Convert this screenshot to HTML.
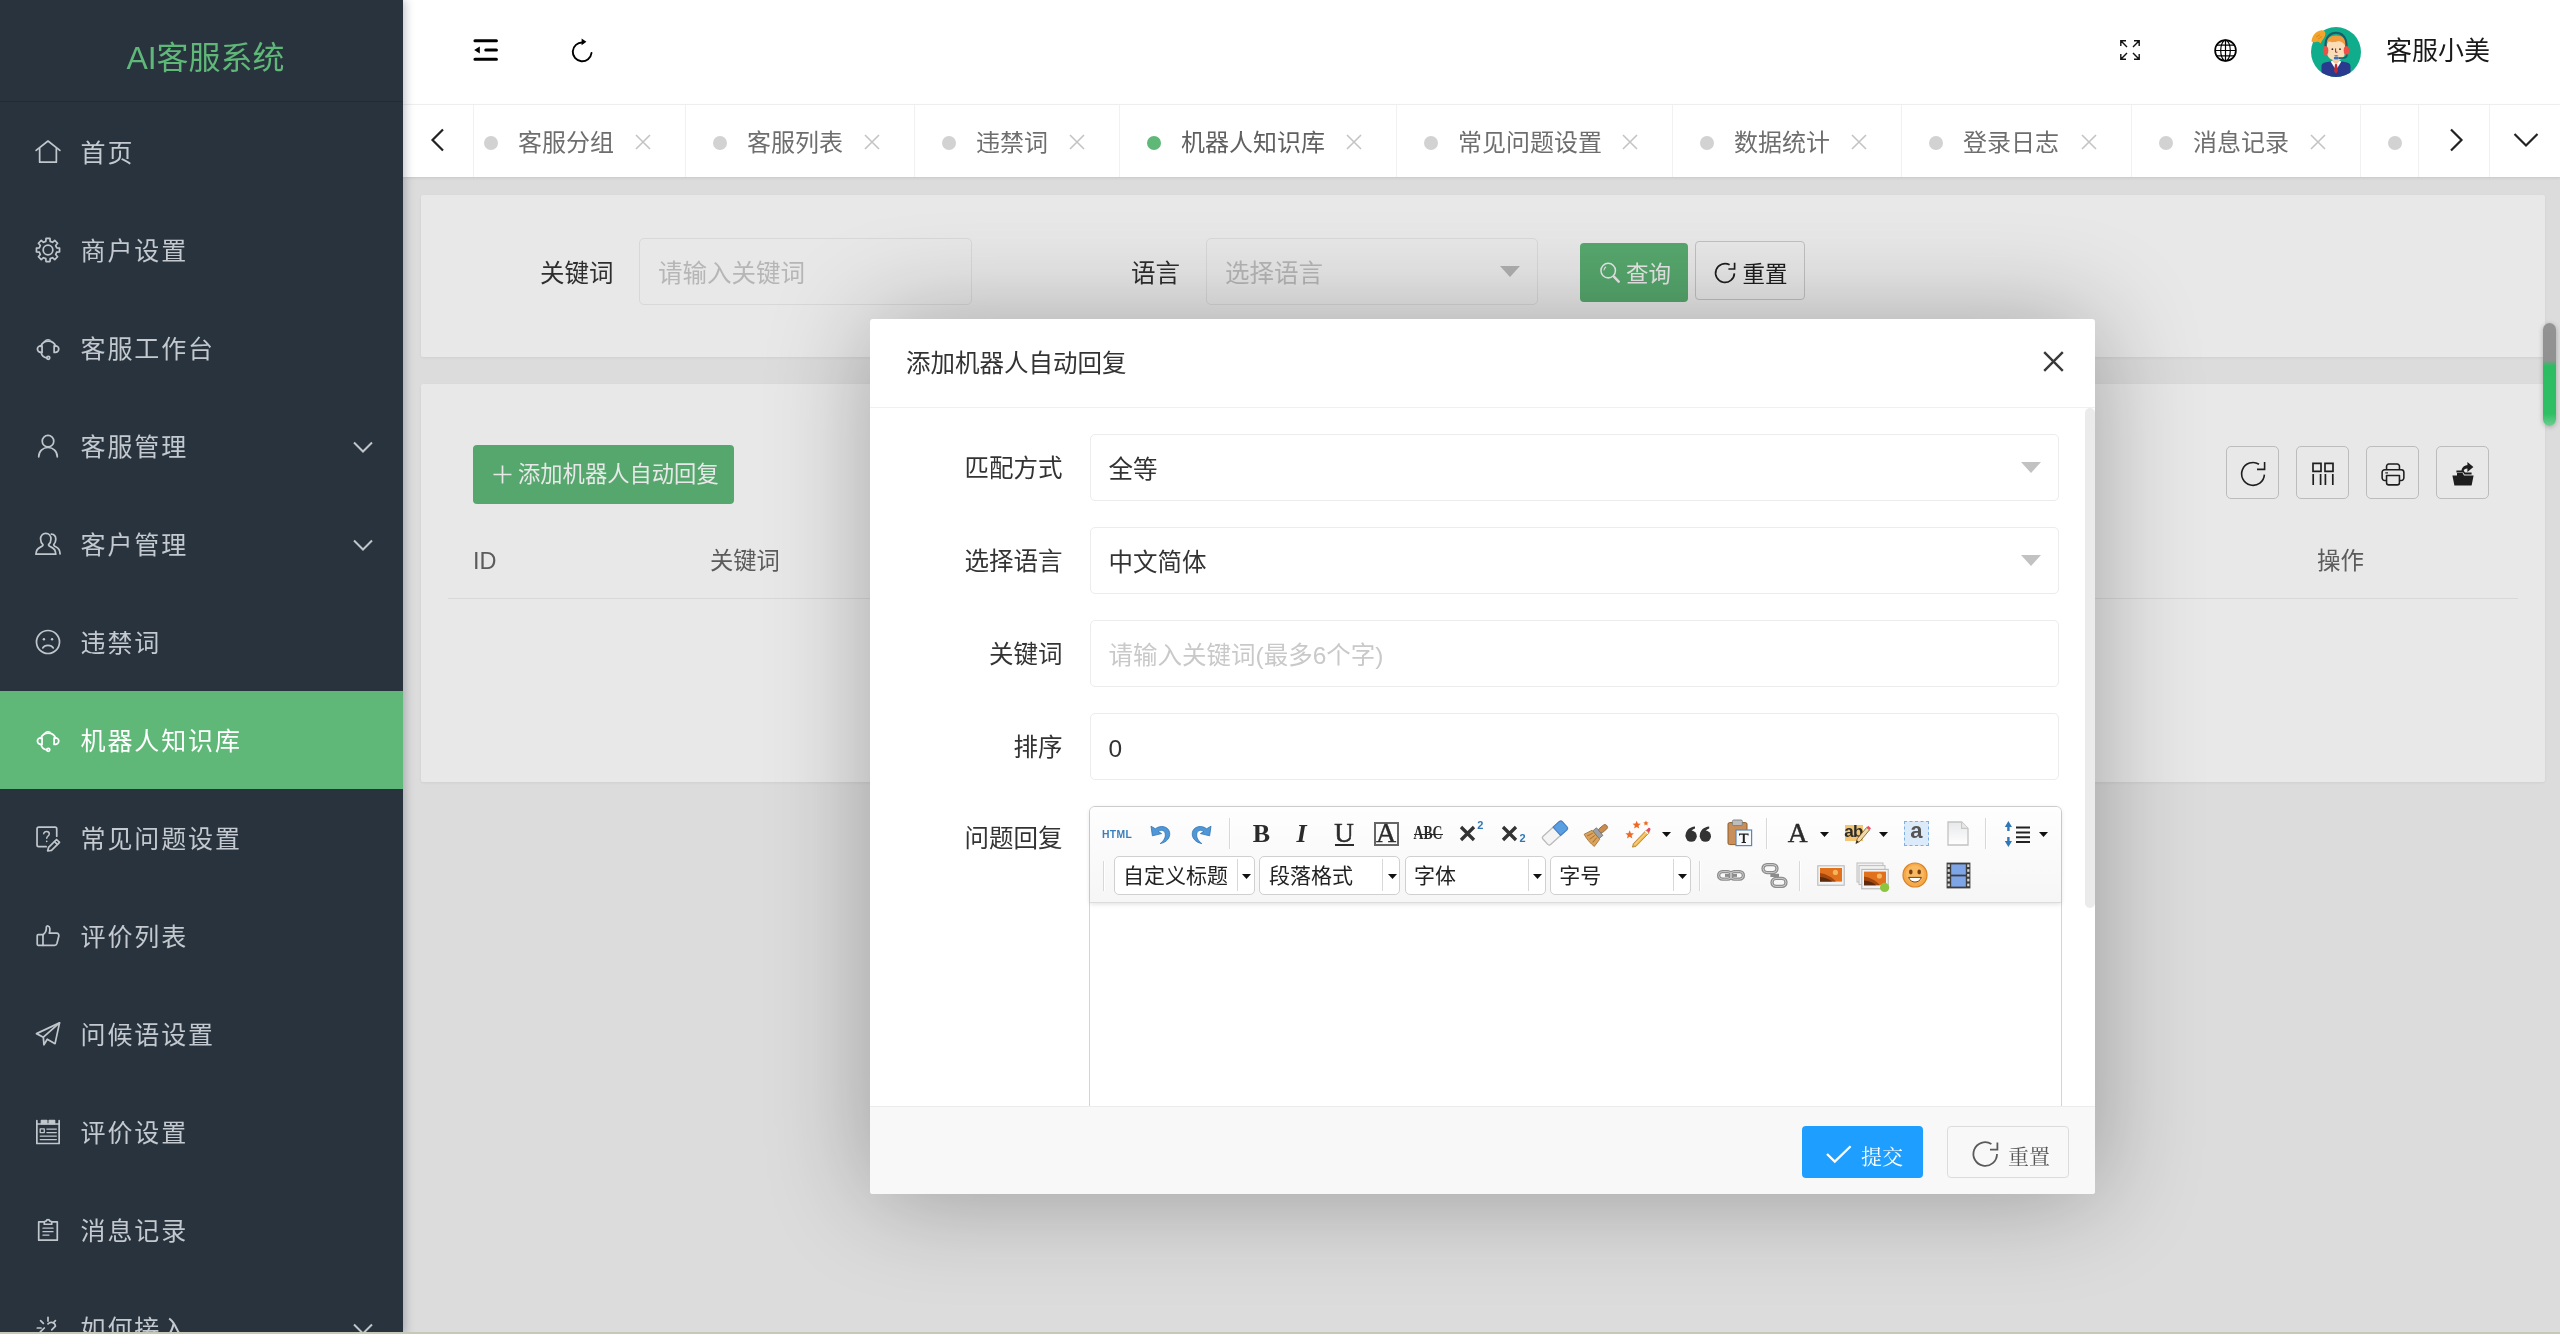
<!DOCTYPE html>
<html lang="zh-CN">
<head>
<meta charset="utf-8">
<title>AI客服系统</title>
<style>

*{box-sizing:border-box;margin:0;padding:0}
html,body{width:2560px;height:1334px;overflow:hidden;background:#f2f2f2;font-family:"Liberation Sans","Noto Sans CJK SC",sans-serif;color:#333}
.abs{position:absolute}
svg{display:block;overflow:visible}
/* ---------- sidebar ---------- */
#side{position:absolute;left:0;top:0;width:403px;height:1334px;background:#28333E;z-index:30;box-shadow:2px 0 9px rgba(20,30,50,.28);overflow:hidden}
#logo{position:absolute;left:0;top:0;width:403px;height:102px;border-bottom:1px solid #222c36;color:#5FB878;font-size:32px;text-align:center;padding-left:8px;line-height:116px}
.mi{position:absolute;left:0;width:403px;height:98px;color:#c3c9cf;font-size:25px;letter-spacing:1.9px;line-height:98px}
.mi .tx{position:absolute;left:80.5px;top:0.5px;white-space:nowrap}
.mi .ic{position:absolute;left:34.5px;top:35.5px;width:26px;height:26px}
.mi .ic svg{width:26px;height:26px;stroke:#c1c6cb;fill:none;stroke-width:1.85;stroke-linecap:round;stroke-linejoin:round}
.mi.on{background:#5FB878;color:#fff}
.mi.on .ic svg{stroke:#fff}
.mi .more{position:absolute;left:352px;top:43px;width:22px;height:14px}
.mi .more svg{width:22px;height:14px;stroke:#c1c6cb;fill:none;stroke-width:2}
/* ---------- header ---------- */
#head{position:absolute;left:403px;top:0;width:2157px;height:105px;background:#fff;border-bottom:1px solid #f2f2f2;z-index:20}
#tabs{position:absolute;left:403px;top:105px;width:2157px;height:72px;background:#fff;z-index:20;box-shadow:0 1px 3px rgba(0,0,0,.10);overflow:hidden}
.tab{position:absolute;top:0;height:72px;border-right:1px solid #f1f1f1;font-size:24px;line-height:76px;color:#6e6e6e;white-space:nowrap}
.tab .dot{position:absolute;left:27px;top:31px;width:14px;height:14px;border-radius:50%;background:#d2d2d2}
.tab.on .dot{background:#5FB878}
.tab.on{color:#606060}
.tab .t{position:absolute;left:61px;top:0}
.tab .x{position:absolute;top:29px;width:16px;height:16px}
.tab .x svg{width:16px;height:16px;stroke:#c4c4c4;stroke-width:1.6;fill:none}
.tcell{position:absolute;top:0;height:72px;background:#fff;z-index:2}
/* ---------- page body (iframe) ---------- */
#page{position:absolute;left:403px;top:177px;width:2157px;height:1157px;background:#f2f2f2;z-index:1;overflow:hidden}
.card{position:absolute;background:#fff;border-radius:2px;box-shadow:0 1px 3px rgba(0,0,0,.06)}
#shade{position:absolute;left:0;top:0;width:2157px;height:1157px;background:rgba(0,0,0,.09);z-index:5}
.lbl{position:absolute;font-size:24.5px;color:#333;white-space:nowrap;line-height:70px;height:66px}
.inp{position:absolute;height:66.5px;border:1px solid #ececec;border-radius:5px;background:#fff;font-size:24.5px;line-height:69px;padding-left:18px;color:#333;white-space:nowrap;overflow:hidden}
.ph{color:#c9c9c9}
.caret{position:absolute;width:0;height:0;border-left:10px solid transparent;border-right:10px solid transparent;border-top:11px solid #c2c2c2}
.btn{position:absolute;border-radius:4px;white-space:nowrap}
/* ---------- modal ---------- */
#modal{position:absolute;left:467px;top:142px;width:1225px;height:875px;background:#fff;border-radius:3px;box-shadow:2px 2px 104px rgba(0,0,0,.3);z-index:10;overflow:hidden}

.tb{position:absolute;top:269px;width:53px;height:53px;border:1px solid #cfcfcf;border-radius:5px;background:#fff}
.tb svg{position:absolute;left:11.5px;top:13px;width:28px;height:28px}

#ed{position:absolute;left:219px;top:486.5px;width:972.5px;height:330px;border:1px solid #d4d4d4;border-radius:6px;background:#fff}
#edtb{position:absolute;left:0;top:0;width:970.5px;height:96.5px;border-bottom:1px solid #dcdcdc;border-radius:5px 5px 0 0;background:linear-gradient(#fefefe,#f6f6f6);box-shadow:0 1px 5px rgba(0,0,0,.13)}
.tbt{width:60px;height:40px;text-align:center;white-space:nowrap}
.cb{position:absolute;width:141px;height:39px;border:1px solid #d0d0d0;border-radius:5px;background:#fff;font-size:21px;line-height:38px;color:#222;white-space:nowrap}
.cb span{position:absolute;left:8.5px;top:0}
.cb i{position:absolute;left:122px;top:2px;width:1px;height:32px;background:#d8d8d8}
#foot{position:absolute;left:0;top:787px;width:1225px;height:90px;background:#f8f8f8;border-top:1px solid #ececec}

#side,#head,#tabs,#page{will-change:transform}

</style>
</head>
<body>
<div id="side">
<div id="logo">AI客服系统</div>
<div class="mi" style="top:103px"><span class="ic"><svg viewBox="0 0 28 28"><path d="M1.2 12.3 L14 2.2 L26.8 12.3"/><path d="M5 10.2 V25 H23 V10.2"/></svg></span><span class="tx">首页</span></div>
<div class="mi" style="top:201px"><span class="ic"><svg viewBox="0 0 28 28"><path d="M23.30 11.62 L26.42 11.87 L26.42 16.13 L23.30 16.38 L22.26 18.90 L24.29 21.27 L21.27 24.29 L18.90 22.26 L16.38 23.30 L16.13 26.42 L11.87 26.42 L11.62 23.30 L9.10 22.26 L6.73 24.29 L3.71 21.27 L5.74 18.90 L4.70 16.38 L1.58 16.13 L1.58 11.87 L4.70 11.62 L5.74 9.10 L3.71 6.73 L6.73 3.71 L9.10 5.74 L11.62 4.70 L11.87 1.58 L16.13 1.58 L16.38 4.70 L18.90 5.74 L21.27 3.71 L24.29 6.73 L22.26 9.10 Z"/><circle cx="14" cy="14" r="5.2"/></svg></span><span class="tx">商户设置</span></div>
<div class="mi" style="top:299px"><span class="ic"><svg viewBox="0 0 28 28"><path d="M6.2 12.2 A8.6 8.6 0 0 1 22.4 12.2"/><path d="M10 7.2 A5.6 5.6 0 0 1 16.5 5.6" stroke-width="1.3"/><path d="M7.6 11.6 H6.2 A3.6 3.6 0 0 0 6.2 18.8 H7.6 Z"/><path d="M20.6 11.6 H22 A3.6 3.6 0 0 1 22 18.8 H20.6 Z"/><path d="M6.6 18.8 C7.2 22.6 9.6 24.3 12.6 24.6"/><circle cx="14.3" cy="24.6" r="1.6"/></svg></span><span class="tx">客服工作台</span></div>
<div class="mi" style="top:397px"><span class="ic"><svg viewBox="0 0 28 28"><circle cx="14" cy="8.8" r="6.2"/><path d="M4 25.6 C4 19.6 8.4 15.6 14 15.6 S24 19.6 24 25.6"/></svg></span><span class="tx">客服管理</span><span class="more"><svg viewBox="0 0 22 14"><path d="M2 2.5 L11 11.5 L20 2.5"/></svg></span></div>
<div class="mi" style="top:495px"><span class="ic"><svg viewBox="0 0 28 28"><path d="M11.6 2.6 C15 2.6 17.2 5.2 17.2 8.6 C17.2 11.4 16 13.4 14.6 14.6 C14.4 16 15.6 16.6 18 17.6 C20.8 18.8 22.2 20.6 22.4 25 H1 C1.2 20.6 2.6 18.8 5.4 17.6 C7.8 16.6 8.8 16 8.6 14.6 C7.2 13.4 6 11.4 6 8.6 C6 5.2 8.2 2.6 11.6 2.6 Z"/><path d="M17.6 3.4 C20.6 3.6 22.4 6 22.4 9 C22.4 11.6 21.4 13.4 20.2 14.6 C20 15.8 21 16.4 22.8 17.2 C25.4 18.4 26.8 20.4 27 24.6"/></svg></span><span class="tx">客户管理</span><span class="more"><svg viewBox="0 0 22 14"><path d="M2 2.5 L11 11.5 L20 2.5"/></svg></span></div>
<div class="mi" style="top:593px"><span class="ic"><svg viewBox="0 0 28 28"><circle cx="14" cy="14" r="12.4"/><circle cx="9.6" cy="11" r="1.3" fill="currentColor" stroke="none"/><circle cx="18.4" cy="11" r="1.3" fill="currentColor" stroke="none"/><path d="M8.4 20.4 C10.4 16.6 17.6 16.6 19.6 20.4"/></svg></span><span class="tx">违禁词</span></div>
<div class="mi on" style="top:691px"><span class="ic"><svg viewBox="0 0 28 28"><path d="M6.2 12.2 A8.6 8.6 0 0 1 22.4 12.2"/><path d="M10 7.2 A5.6 5.6 0 0 1 16.5 5.6" stroke-width="1.3"/><path d="M7.6 11.6 H6.2 A3.6 3.6 0 0 0 6.2 18.8 H7.6 Z"/><path d="M20.6 11.6 H22 A3.6 3.6 0 0 1 22 18.8 H20.6 Z"/><path d="M6.6 18.8 C7.2 22.6 9.6 24.3 12.6 24.6"/><circle cx="14.3" cy="24.6" r="1.6"/></svg></span><span class="tx">机器人知识库</span></div>
<div class="mi" style="top:789px"><span class="ic"><svg viewBox="0 0 28 28"><path d="M23.4 12 V4 A1.8 1.8 0 0 0 21.6 2.2 H4 A1.8 1.8 0 0 0 2.2 4 V21.6 A1.8 1.8 0 0 0 4 23.4 H12"/><path d="M9.4 9.4 C9.4 6.2 15.4 6.2 15.4 9.6 C15.4 11.8 12.6 12 12.6 14.4" stroke-width="1.6"/><circle cx="12.6" cy="17.6" r="0.9" fill="currentColor" stroke="none"/><path d="M14.6 24.2 L23.2 15.6 L26.4 18.8 L17.8 27.4 L13.6 28 Z"/><path d="M21 17.8 L24.2 21"/></svg></span><span class="tx">常见问题设置</span></div>
<div class="mi" style="top:887px"><span class="ic"><svg viewBox="0 0 28 28"><path d="M8.6 12.6 H3.4 A1 1 0 0 0 2.4 13.6 V23 A1 1 0 0 0 3.4 24 H8.6 Z"/><path d="M8.6 12.6 C11.6 10.6 12.4 7.6 12.2 4.4 C12.2 2.6 15.6 2.6 16 6 C16.2 8 15.8 9.6 15.4 11 H23.2 C25.2 11 26 12.6 25.6 14.2 L23.6 22 C23.2 23.4 22.2 24 21 24 H8.6"/></svg></span><span class="tx">评价列表</span></div>
<div class="mi" style="top:985px"><span class="ic"><svg viewBox="0 0 28 28"><path d="M1.6 13.6 L26.4 2 L21.6 24.4 L13.2 19.6 L9.6 25.6 L9 17.4 Z"/><path d="M9 17.4 L26.4 2"/></svg></span><span class="tx">问候语设置</span></div>
<div class="mi" style="top:1083px"><span class="ic"><svg viewBox="0 0 28 28"><path d="M2 5.4 H26 V26.4 H2 Z"/><path d="M2 5.4 V1.6 M26 5.4 V1.6"/><path d="M7 1.6 H12.6 V5 H7 Z M15.4 1.6 H21 V5 H15.4 Z" fill="currentColor"/><path d="M5.6 10.6 H10 V14.6 H5.6 Z" stroke-width="1.4"/><path d="M12.8 10.8 H23 M12.8 14.6 H23 M5.6 18.4 H23 M5.6 22.2 H23" stroke-width="1.4"/></svg></span><span class="tx">评价设置</span></div>
<div class="mi" style="top:1181px"><span class="ic"><svg viewBox="0 0 28 28"><path d="M9.4 5.2 H4 V25 H24 V5.2 H18.6"/><path d="M10 7.8 V5.6 C10 4.6 11 4.6 12 4.4 C12.4 2.2 15.6 2.2 16 4.4 C17 4.6 18 4.6 18 5.6 V7.8 Z"/><path d="M8.6 12 H19.4 M8.6 15.8 H19.4 M8.6 19.6 H15" stroke-width="1.4"/></svg></span><span class="tx">消息记录</span></div>
<div class="mi" style="top:1279px"><span class="ic"><svg viewBox="0 0 28 28"><path d="M6 6 L9 9 M14 2.5 V6.5 M2.5 14 H6.5 M22 6 L19.6 8.4"/><path d="M14 9.5 C17 6.5 21.5 8 22 12 L18 16"/><path d="M10 14 L6 18 C3 21 6 25 10 24"/></svg></span><span class="tx">如何接入</span><span class="more"><svg viewBox="0 0 22 14"><path d="M2 2.5 L11 11.5 L20 2.5"/></svg></span></div>
</div>
<div id="head">
<svg class="abs" style="left:70px;top:38px;width:26px;height:24px" viewBox="0 0 26 24" fill="none" stroke="#000" stroke-width="3.1" stroke-linecap="round"><path d="M2 2.8 H23.4 M12.8 12 H23.4 M2 21.2 H23.4"/><path d="M1.2 12 L6.8 8.4 V15.6 Z" fill="#000" stroke="none"/></svg>
<svg class="abs" style="left:166px;top:36px;width:28px;height:28px" viewBox="0 0 28 28" fill="none" stroke="#000" stroke-width="1.9" stroke-linecap="round"><path d="M22.5 17 A9.4 9.4 0 1 1 13.6 6.5"/><path d="M12.6 2.6 L17.4 5.8 L12.6 9.2 Z" fill="#000" stroke="none"/></svg>
<svg class="abs" style="left:1716.5px;top:39.5px;width:20px;height:20px" viewBox="0 0 20 20" fill="none" stroke="#111" stroke-width="1.4"><path d="M7.0 7.0 L0.8 0.8 M6.0 0.8 H0.8 V6.0 M13.0 7.0 L19.2 0.8 M14.0 0.8 H19.2 V6.0 M7.0 13.0 L0.8 19.2 M6.0 19.2 H0.8 V14.0 M13.0 13.0 L19.2 19.2 M14.0 19.2 H19.2 V14.0"/></svg>
<svg class="abs" style="left:1811px;top:38.5px;width:23px;height:23px" viewBox="0 0 23 23" fill="none" stroke="#000" stroke-width="1.7"><circle cx="11.5" cy="11.5" r="10.4"/><ellipse cx="11.5" cy="11.5" rx="4.8" ry="10.4" stroke-width="1.2"/><path d="M1.1 11.5 H21.9 M11.5 1.1 V21.9 M2.8 6.2 H20.2 M2.8 16.8 H20.2" stroke-width="1.2"/></svg>
<svg class="abs" style="left:1908px;top:27px;width:50px;height:50px" viewBox="0 0 50 50">
<defs><clipPath id="avc"><circle cx="25" cy="25" r="25"/></clipPath></defs>
<circle cx="25" cy="25" r="25" fill="#10ad8c"/>
<g clip-path="url(#avc)">
<path d="M10.5 50 V39.5 C10.5 36.5 12.5 35.6 15 35.2 L21 34 H29 L35 35.2 C37.5 35.6 39.5 36.5 39.5 39.5 V50 Z" fill="#2a3b8f"/>
<path d="M19.6 34.4 L25 43 L30.4 34.4 L25 32.6 Z" fill="#fff"/>
<path d="M24 37 H26 L26.9 44.5 L25 46.4 L23.1 44.5 Z" fill="#c62a2f"/>
<path d="M21.6 29 H28.4 V34.6 L25 37.4 L21.6 34.6 Z" fill="#f4c9a0"/>
</g>
<path d="M16 17 C16 9.5 34 9.5 34 17 V25 C34 30.5 30 33.4 25 33.4 S16 30.5 16 25 Z" fill="#fbdcb8"/>
<path d="M15.6 19 C14.6 11 20 8.4 25.4 8.6 C31 8.6 35.4 11.4 34.4 19 C33 16.4 31 14.6 27.6 14 C23.6 15.6 19 15.2 17.6 14.6 C16.6 15.8 16 17.2 15.6 19 Z" fill="#ef9a3d"/>
<path d="M14.6 21 C13.2 8.6 21 5.8 25 5.8 S36.8 8.6 35.4 21" fill="none" stroke="#1d5a68" stroke-width="2.1"/>
<ellipse cx="14.6" cy="23.6" rx="2.7" ry="4.5" fill="#ef4f45"/>
<ellipse cx="35.4" cy="23.6" rx="2.7" ry="4.5" fill="#ef4f45"/>
<path d="M36 27.6 C36 31.4 33 31.2 27.6 31.2" fill="none" stroke="#1d5a68" stroke-width="1.7"/>
<rect x="22.8" y="29.6" width="5" height="3" rx="1.5" fill="#3b6fb6"/>
<circle cx="21.4" cy="22.2" r="0.9" fill="#3a2a2a"/><circle cx="29" cy="22.2" r="0.9" fill="#3a2a2a"/>
<path d="M24.6 21.4 V25.2 H26.4" fill="none" stroke="#7a3b2a" stroke-width="1"/>
<path d="M22.8 28 C24 29.2 26.4 29.2 27.6 28 Z" fill="#d8564a"/>
<path d="M0.5 14.5 C1 9 4 4.6 9.6 3.4 C12.6 3 14.6 4.4 14.4 7 C14.2 10 12 12 9.6 16.4 C8 14.6 6.6 14.4 5 15 C3.4 15.4 1.6 15.4 0.5 14.5 Z" fill="#f2a42c"/>
<path d="M5 10 L9 7.6 M7 12 L11 9.4" stroke="#d98512" stroke-width="0.9" fill="none"/>
</svg>
<div class="abs" style="left:1983px;top:0;font-size:26px;line-height:102px;color:#1a1a1a;white-space:nowrap">客服小美</div>
</div>
<div id="tabs">
<div class="tab" style="left:54px;width:229px"><i class="dot"></i><span class="t">客服分组</span><span class="x" style="left:178px"><svg viewBox="0 0 16 16"><path d="M1 1 L15 15 M15 1 L1 15"/></svg></span></div><div class="tab" style="left:283px;width:229px"><i class="dot"></i><span class="t">客服列表</span><span class="x" style="left:178px"><svg viewBox="0 0 16 16"><path d="M1 1 L15 15 M15 1 L1 15"/></svg></span></div><div class="tab" style="left:512px;width:205px"><i class="dot"></i><span class="t">违禁词</span><span class="x" style="left:154px"><svg viewBox="0 0 16 16"><path d="M1 1 L15 15 M15 1 L1 15"/></svg></span></div><div class="tab on" style="left:717px;width:277px"><i class="dot"></i><span class="t">机器人知识库</span><span class="x" style="left:226px"><svg viewBox="0 0 16 16"><path d="M1 1 L15 15 M15 1 L1 15"/></svg></span></div><div class="tab" style="left:994px;width:276px"><i class="dot"></i><span class="t">常见问题设置</span><span class="x" style="left:225px"><svg viewBox="0 0 16 16"><path d="M1 1 L15 15 M15 1 L1 15"/></svg></span></div><div class="tab" style="left:1270px;width:229px"><i class="dot"></i><span class="t">数据统计</span><span class="x" style="left:178px"><svg viewBox="0 0 16 16"><path d="M1 1 L15 15 M15 1 L1 15"/></svg></span></div><div class="tab" style="left:1499px;width:230px"><i class="dot"></i><span class="t">登录日志</span><span class="x" style="left:179px"><svg viewBox="0 0 16 16"><path d="M1 1 L15 15 M15 1 L1 15"/></svg></span></div><div class="tab" style="left:1729px;width:229px"><i class="dot"></i><span class="t">消息记录</span><span class="x" style="left:178px"><svg viewBox="0 0 16 16"><path d="M1 1 L15 15 M15 1 L1 15"/></svg></span></div><div class="tab" style="left:1958px;width:229px"><i class="dot"></i><span class="t"></span><span class="x" style="left:178px"><svg viewBox="0 0 16 16"><path d="M1 1 L15 15 M15 1 L1 15"/></svg></span></div>
<div class="tcell" style="left:0;width:71px;border-right:1px solid #f1f1f1"><svg class="abs" style="left:27px;top:23px;width:16px;height:24px" viewBox="0 0 16 24" fill="none" stroke="#222" stroke-width="2.2"><path d="M13 1.5 L2.5 12 L13 22.5"/></svg></div>
<div class="tcell" style="left:2015px;width:72px;border-left:1px solid #f1f1f1;border-right:1px solid #f1f1f1"><svg class="abs" style="left:28.5px;top:23px;width:16px;height:24px" viewBox="0 0 16 24" fill="none" stroke="#222" stroke-width="2.2"><path d="M3 1.5 L13.5 12 L3 22.5"/></svg></div>
<div class="tcell" style="left:2087px;width:70px"><svg class="abs" style="left:23px;top:27px;width:26px;height:16px" viewBox="0 0 26 16" fill="none" stroke="#222" stroke-width="2.2"><path d="M1.5 2 L13 13.5 L24.5 2"/></svg></div>
</div>
<div id="page">
<div class="card" style="left:18px;top:18px;width:2124px;height:162px"></div>
<div class="card" style="left:18px;top:207px;width:2124px;height:398px"></div>
<div class="lbl" style="left:137px;top:62px">关键词</div>
<div class="inp" style="left:236px;top:61px;width:333px;border-color:#eeeeee"><span class="ph">请输入关键词</span></div>
<div class="lbl" style="left:728px;top:62px">语言</div>
<div class="inp" style="left:803px;top:61px;width:332px;border-color:#eeeeee"><span class="ph">选择语言</span><i class="caret" style="left:293px;top:27px"></i></div>
<div class="btn" style="left:1177px;top:66px;width:108px;height:59px;background:#5FB878;color:#fff;font-size:22.5px;line-height:63px">
<svg class="abs" style="left:19.5px;top:19px;width:21px;height:22px" viewBox="0 0 22 23" fill="none" stroke="#fff" stroke-width="1.6" stroke-linecap="round"><circle cx="8.6" cy="9" r="7.6"/><path d="M4.2 8.4 A4.6 4.6 0 0 1 6 5.2" stroke-width="1.1"/><path d="M14.8 15.6 L19.6 20.6" stroke-width="2.6"/></svg>
<span class="abs" style="left:46px;top:0">查询</span></div>
<div class="btn" style="left:1291.5px;top:63.5px;width:110px;height:59px;background:#fff;border:1px solid #d4d4d4;color:#222;font-size:22.5px;line-height:65px">
<svg class="abs" style="left:18.5px;top:20px;width:22px;height:22px" viewBox="0 0 22 22" fill="none" stroke="#222" stroke-width="1.7"><path d="M20.4 11.4 A9.4 9.4 0 1 1 15.6 2.8"/><path d="M20.6 .8 V7 H14.4"/></svg>
<span class="abs" style="left:47px;top:0">重置</span></div>

<div class="btn" style="left:70px;top:268px;width:261px;height:59px;background:#5FB878;color:#fff;font-size:22.3px;line-height:60px">
<svg class="abs" style="left:20px;top:20px;width:19px;height:19px" viewBox="0 0 19 19" fill="none" stroke="#fff" stroke-width="1.7"><path d="M9.5 0.5 V18.5 M0.5 9.5 H18.5"/></svg>
<span class="abs" style="left:45px;top:0">添加机器人自动回复</span></div>
<div class="abs" style="left:70px;top:362px;font-size:23.5px;line-height:44px;color:#666">ID</div>
<div class="abs" style="left:307px;top:362px;font-size:23.3px;line-height:44px;color:#666">关键词</div>
<div class="abs" style="left:1914px;top:362px;font-size:23.5px;line-height:44px;color:#666">操作</div>
<div class="abs" style="left:45px;top:421px;width:2070px;height:1px;background:#eee"></div>
<!-- table tool buttons -->
<div class="tb" style="left:1823px"><svg viewBox="0 0 28 28" fill="none" stroke="#222" stroke-width="1.6"><path d="M25.4 14.6 A11.4 11.4 0 1 1 20 4.2"/><path d="M25.6 2 V9.4 H18"/></svg></div>
<div class="tb" style="left:1893px"><svg viewBox="0 0 28 28" fill="none" stroke="#222" stroke-width="1.7"><path d="M4 3.4 H12 V11.4 H4 Z M16 3.4 H24 V11.4 H16 Z M4.2 14 V25 M11.6 14 V25 M16.4 14 V25 M23.8 14 V25"/></svg></div>
<div class="tb" style="left:1963px"><svg viewBox="-1.2 -1.6 30.4 30.4" fill="none" stroke="#222" stroke-width="1.7" stroke-linejoin="round"><path d="M7 9 V5.2 A2.4 2.4 0 0 1 9.4 2.8 H18.6 A2.4 2.4 0 0 1 21 5.2 V9"/><path d="M7 20.6 H5 A2.8 2.8 0 0 1 2.2 17.8 V11.8 A2.8 2.8 0 0 1 5 9 H23 A2.8 2.8 0 0 1 25.8 11.8 V17.8 A2.8 2.8 0 0 1 23 20.6 H21"/><path d="M7 15.2 H21 V23 A2.4 2.4 0 0 1 18.6 25.4 H9.4 A2.4 2.4 0 0 1 7 23 Z"/><path d="M5.6 12.4 H8.6" stroke-width="1.3"/></svg></div>
<div class="tb" style="left:2033px"><svg viewBox="0 0 28 28" fill="#222" stroke="none"><path d="M3.4 15.6 H8 V13 H13.6 L15 15.6 H24.6 L22.6 25.6 H5.4 Z"/><path d="M7.4 12.4 V10.4 H14.6 L16 12.4 H22.6 V14.6 H15.6 L14.2 12.4 Z" /><path d="M12.4 12 C12.4 7.4 15 5.2 18.4 5.2 V2 L24.4 7 L18.4 12 V8.6 C16.2 8.6 14.6 9.4 14.4 12 Z"/></svg></div>
<!-- custom scrollbar widget -->
<div class="abs" style="left:2140px;top:146px;width:13px;height:103px;border-radius:7px;background:linear-gradient(#a2a2a2 0,#a0a0a0 36%,#31d06d 42%,#33d26f 88%,#7be19f 100%);box-shadow:0 1px 5px rgba(0,0,0,.25)"></div>

<div id="shade"></div>
<div id="modal">
<div class="abs" style="left:36px;top:0;height:88px;line-height:90px;font-size:24.5px;color:#333;white-space:nowrap">添加机器人自动回复</div>
<svg class="abs" style="left:1173px;top:32px;width:21px;height:21px" viewBox="0 0 21 21" fill="none" stroke="#3a3a3a" stroke-width="2.4"><path d="M1.2 1.2 L19.8 19.8 M19.8 1.2 L1.2 19.8"/></svg>
<div class="abs" style="left:0;top:88px;width:1225px;height:1px;background:#f0f0f0"></div>
<div class="abs" style="left:1214.5px;top:89px;width:10.5px;height:500px;background:#ebebeb;border-radius:5px"></div>
<div class="lbl" style="left:0;width:192.5px;text-align:right;top:115px">匹配方式</div><div class="inp" style="left:219.5px;top:115px;width:969.5px">全等<i class="caret" style="left:930px;top:27px"></i></div>
<div class="lbl" style="left:0;width:192.5px;text-align:right;top:208px">选择语言</div><div class="inp" style="left:219.5px;top:208px;width:969.5px">中文简体<i class="caret" style="left:930px;top:27px"></i></div>
<div class="lbl" style="left:0;width:192.5px;text-align:right;top:301px">关键词</div><div class="inp" style="left:219.5px;top:301px;width:969.5px"><span class="ph">请输入关键词(最多6个字)</span></div>
<div class="lbl" style="left:0;width:192.5px;text-align:right;top:394px">排序</div><div class="inp" style="left:219.5px;top:394px;width:969.5px">0</div>
<div class="lbl" style="left:0;width:192.5px;text-align:right;top:485px">问题回复</div>
<div id="ed">
<div id="edtb"></div>
</div>
<span class="abs tbt" style="left:217px;top:494.5px;font:bold 11.5px/40px 'Liberation Sans',sans-serif;color:#3a7fbd;letter-spacing:.4px;transform:scaleX(.9)">HTML</span><svg class="abs" style="left:279.0px;top:503.5px;width:22px;height:22px" viewBox="0 0 22 22"><path d="M2 3.2 L3.4 12.8 L12.6 10.6 L9.4 8.6 C11.4 6.6 15.4 6.8 16.2 10.6 C17 14.6 14.6 17.8 11.2 20.6 C17.6 19.4 21.6 14.6 20.6 9.4 C19.4 3.4 11.4 1.6 6.4 5.8 Z" fill="#4f97d6" stroke="#2f74b5" stroke-width="0.8" stroke-linejoin="round"/></svg><svg class="abs" style="left:321.0px;top:503.5px;width:22px;height:22px" viewBox="0 0 22 22"><g transform="translate(22,0) scale(-1,1)"><path d="M2 3.2 L3.4 12.8 L12.6 10.6 L9.4 8.6 C11.4 6.6 15.4 6.8 16.2 10.6 C17 14.6 14.6 17.8 11.2 20.6 C17.6 19.4 21.6 14.6 20.6 9.4 C19.4 3.4 11.4 1.6 6.4 5.8 Z" fill="#4f97d6" stroke="#2f74b5" stroke-width="0.8" stroke-linejoin="round"/></g></svg><i class="abs" style="left:359px;top:499px;width:2px;height:31px;background:#d8d8d8;border-right:1px solid #fff;width:2px"></i><span class="abs tbt" style="left:361.5px;top:495px;font:bold 26px/40px 'Liberation Serif',serif;color:#2b2b2b">B</span><span class="abs tbt" style="left:401.5px;top:495px;font:italic bold 26px/40px 'Liberation Serif',serif;color:#2b2b2b">I</span><span class="abs tbt" style="left:444px;top:494px;font:27px/40px 'Liberation Serif',serif;color:#2b2b2b;-webkit-text-stroke:.5px #2b2b2b">U</span><i class="abs" style="left:464.5px;top:524.6px;width:19px;height:2px;background:#2b2b2b"></i><i class="abs" style="left:504px;top:502.5px;width:24.5px;height:24px;border:2px solid #666"></i><span class="abs tbt" style="left:486.20000000000005px;top:493.5px;font:28px/40px 'Liberation Serif',serif;color:#2b2b2b;-webkit-text-stroke:.4px #2b2b2b">A</span><span class="abs tbt" style="left:528.3px;top:493.5px;font:bold 18px/40px 'Liberation Serif',serif;color:#2b2b2b;transform:scaleX(.76)">ABC</span><i class="abs" style="left:544px;top:514.6px;width:28.5px;height:1.6px;background:#2b2b2b"></i><svg class="abs" style="left:589.0px;top:505.5px;width:17px;height:17px" viewBox="0 0 17 17"><path d="M2 2 L15 15 M15 2 L2 15" stroke="#333" stroke-width="3.3" fill="none"/></svg><span class="abs tbt" style="left:580.3px;top:485.5px;font:bold 11px/40px 'Liberation Sans',sans-serif;color:#2f77b6">2</span><svg class="abs" style="left:631.0px;top:505.5px;width:17px;height:17px" viewBox="0 0 17 17"><path d="M2 2 L15 15 M15 2 L2 15" stroke="#333" stroke-width="3.3" fill="none"/></svg><span class="abs tbt" style="left:622.5px;top:499px;font:bold 11px/40px 'Liberation Sans',sans-serif;color:#2f77b6">2</span><svg class="abs" style="left:669.5px;top:501.0px;width:30px;height:26px" viewBox="0 0 30 26"><g transform="rotate(-42 15 13)"><rect x="2" y="7.4" width="26" height="11.2" rx="2" fill="#f4f4f4" stroke="#b9b9b9" stroke-width="1.2"/><path d="M17.5 7.4 H26 A2 2 0 0 1 28 9.4 V16.6 A2 2 0 0 1 26 18.6 H17.5 Z" fill="#5b9fe3" stroke="#3f7fc4" stroke-width="1"/></g></svg><svg class="abs" style="left:713.5px;top:501.5px;width:28px;height:24px" viewBox="0 0 30 26"><g transform="rotate(-40 15 13)"><rect x="16.5" y="10.2" width="11" height="5.6" rx="2.6" fill="#c98d4f" stroke="#8a5a2a" stroke-width=".8"/><rect x="12" y="7.6" width="5.4" height="10.8" fill="#9aa0a6" stroke="#6e6e6e" stroke-width=".8"/><path d="M12 6.6 L2.6 4.4 C1.4 9 1.4 17 2.6 21.6 L12 19.4 Z" fill="#dca45c" stroke="#9a6a34" stroke-width=".8"/><path d="M4 8 L10.6 9.4 M3.6 12.4 L10.6 12.8 M4 17 L10.6 16" stroke="#a87335" stroke-width="1"/></g></svg><svg class="abs" style="left:754.0px;top:500.5px;width:29px;height:28px" viewBox="0 0 31 32"><path d="M9.6 27 L24.4 11.6 L27.6 14.6 L12.8 30 L8.6 31 Z" fill="#f0b347" stroke="#b07a22" stroke-width=".9"/><path d="M11 28.4 L25.8 13" stroke="#f8d58a" stroke-width="1.2"/><path d="M23.2 12.8 L26.4 15.8" stroke="#fff" stroke-width="1.3"/><path d="M24.4 11.6 L26.8 9 C28 8 30 10 29 11.4 L27.6 14.6 Z" fill="#e8476a"/><path d="M0 -4.4 L1.3 -1.4 L4.4 -1.2 L2 .9 L2.8 4 L0 2.3 L-2.8 4 L-2 .9 L-4.4 -1.2 L-1.3 -1.4 Z" fill="#ec6a25" transform="translate(13.4,5.6) scale(1.05)"/><path d="M0 -4.4 L1.3 -1.4 L4.4 -1.2 L2 .9 L2.8 4 L0 2.3 L-2.8 4 L-2 .9 L-4.4 -1.2 L-1.3 -1.4 Z" fill="#ec6a25" transform="translate(5.4,16.6) scale(1.1)"/><path d="M0 -4.4 L1.3 -1.4 L4.4 -1.2 L2 .9 L2.8 4 L0 2.3 L-2.8 4 L-2 .9 L-4.4 -1.2 L-1.3 -1.4 Z" fill="#ec6a25" transform="translate(24,3.6) scale(.7)"/></svg><svg class="abs" style="left:791.5px;top:512.5px;width:9px;height:5px" viewBox="0 0 9 5"><path d="M0 0 H9 L4.5 5 Z" fill="#111"/></svg><svg class="abs" style="left:814.5px;top:506.5px;width:27px;height:16px" viewBox="0 0 27 16"><g fill="#333"><circle cx="6.2" cy="10.2" r="5.6"/><path d="M0.6 10.2 C0.6 4 4.4 1 10 0.4 L10 2.4 C6.6 3.4 5.4 6 5.6 8.4 Z"/><circle cx="20.4" cy="10.2" r="5.6"/><path d="M14.8 10.2 C14.8 4 18.6 1 24.2 0.4 L24.2 2.4 C20.8 3.4 19.6 6 19.8 8.4 Z"/></g></svg><svg class="abs" style="left:857.3px;top:500.0px;width:26px;height:28px" viewBox="0 0 26 28"><rect x="1" y="3.6" width="19" height="22" rx="1.6" fill="#c98f58" stroke="#8d5c2c" stroke-width="1"/><rect x="5.4" y="1" width="10" height="5.6" rx="1.4" fill="#bdbdbd" stroke="#7e7e7e" stroke-width=".9"/><rect x="9" y="11" width="15.6" height="15.6" fill="#f7f9fc" stroke="#5d86b8" stroke-width="1.2"/><path d="M12 14.4 H21.6 V16.6 H20.6 V15.8 H17.8 V23 H19 V24 H14.6 V23 H15.8 V15.8 H13 V16.6 H12 Z" fill="#222"/></svg><i class="abs" style="left:896px;top:499px;width:2px;height:31px;background:#d8d8d8;border-right:1px solid #fff;width:2px"></i><span class="abs tbt" style="left:897.8px;top:493.5px;font:27.5px/40px 'Liberation Serif',serif;color:#2b2b2b;-webkit-text-stroke:.5px #2b2b2b">A</span><svg class="abs" style="left:950.2px;top:512.5px;width:9px;height:5px" viewBox="0 0 9 5"><path d="M0 0 H9 L4.5 5 Z" fill="#111"/></svg><i class="abs" style="left:974.5px;top:505.5px;width:18.5px;height:16px;background:#f4c673"></i><span class="abs tbt" style="left:953.5px;top:492.5px;font:bold 17px/40px 'Liberation Sans',sans-serif;color:#2b2b2b;letter-spacing:-.6px">ab</span><svg class="abs" style="left:983.5px;top:505.0px;width:18px;height:22px" viewBox="0 0 19 22"><path d="M2 20 L3.4 15 L13.4 3 L16.4 5.6 L6.4 17.6 Z" fill="#f3d9a8" stroke="#7a5a2a" stroke-width=".9"/><path d="M13.4 3 L15 1.2 L18 3.8 L16.4 5.6 Z" fill="#e8506a"/><path d="M2 20 L3 16.6 L5 18.4 Z" fill="#222"/></svg><svg class="abs" style="left:1009.3px;top:512.5px;width:9px;height:5px" viewBox="0 0 9 5"><path d="M0 0 H9 L4.5 5 Z" fill="#111"/></svg><i class="abs" style="left:1034px;top:502px;width:25px;height:25px;background:#dcebf9;border:1.5px dashed #7fb0e0"></i><span class="abs tbt" style="left:1016.3px;top:492px;font:bold 22px/40px 'Liberation Sans',sans-serif;color:#555">a</span><svg class="abs" style="left:1077.0px;top:502.0px;width:22px;height:25px" viewBox="0 0 22 25"><defs><linearGradient id="pgg" x1="0" y1="0" x2="0" y2="1"><stop offset="0" stop-color="#e6e8ea"/><stop offset="1" stop-color="#fff"/></linearGradient></defs><path d="M1 1 H14.6 L21 7.4 V24 H1 Z" fill="url(#pgg)" stroke="#c2c2c2" stroke-width="1.3"/><path d="M14.6 1 V7.4 H21" fill="#e9e9e9" stroke="#c6c6c6" stroke-width="1.1"/></svg><i class="abs" style="left:1115px;top:499px;width:2px;height:31px;background:#d8d8d8;border-right:1px solid #fff;width:2px"></i><svg class="abs" style="left:1133.5px;top:500.5px;width:27px;height:28px" viewBox="0 0 27 28"><path d="M4.4 1 L8 7 H5.6 V11 H3.2 V7 H0.8 Z M4.4 27 L8 21 H5.6 V17 H3.2 V21 H0.8 Z" fill="#2f77b6"/><path d="M12 7.6 H26 M12 12.4 H26 M12 17.2 H26 M12 22 H26" stroke="#222" stroke-width="2"/></svg><svg class="abs" style="left:1169.3px;top:512.5px;width:9px;height:5px" viewBox="0 0 9 5"><path d="M0 0 H9 L4.5 5 Z" fill="#111"/></svg>
<i class="abs" style="left:233px;top:541.5px;width:2px;height:30.5px;background:#d8d8d8;border-right:1px solid #fff;width:2px"></i><div class="cb" style="left:243.6px;top:537px"><span>自定义标题</span><i></i></div><svg class="abs" style="left:372.1px;top:555.0px;width:9px;height:5px" viewBox="0 0 9 5"><path d="M0 0 H9 L4.5 5 Z" fill="#111"/></svg><div class="cb" style="left:389.4px;top:537px"><span>段落格式</span><i></i></div><svg class="abs" style="left:517.9px;top:555.0px;width:9px;height:5px" viewBox="0 0 9 5"><path d="M0 0 H9 L4.5 5 Z" fill="#111"/></svg><div class="cb" style="left:534.6px;top:537px"><span>字体</span><i></i></div><svg class="abs" style="left:663.1px;top:555.0px;width:9px;height:5px" viewBox="0 0 9 5"><path d="M0 0 H9 L4.5 5 Z" fill="#111"/></svg><div class="cb" style="left:679.8px;top:537px"><span>字号</span><i></i></div><svg class="abs" style="left:808.3px;top:555.0px;width:9px;height:5px" viewBox="0 0 9 5"><path d="M0 0 H9 L4.5 5 Z" fill="#111"/></svg><i class="abs" style="left:829.3px;top:541.5px;width:2px;height:30.5px;background:#d8d8d8;border-right:1px solid #fff;width:2px"></i><svg class="abs" style="left:847.0px;top:548.5px;width:28px;height:15px" viewBox="0 0 28 15"><g fill="none" stroke="#8c8c8c" stroke-width="3.3"><rect x="1.6" y="3.6" width="13" height="7.6" rx="3.8"/><rect x="13.4" y="3.6" width="13" height="7.6" rx="3.8"/></g><path d="M8 7.4 H20" stroke="#8c8c8c" stroke-width="3"/><g fill="none" stroke="#dcdcdc" stroke-width=".8"><rect x="1.6" y="3.6" width="13" height="7.6" rx="3.8"/><rect x="13.4" y="3.6" width="13" height="7.6" rx="3.8"/></g></svg><svg class="abs" style="left:890.5px;top:543.0px;width:27px;height:27px" viewBox="0 0 27 27"><g fill="none" stroke="#8c8c8c" stroke-width="3.3"><rect x="2" y="2.6" width="14" height="8" rx="4"/><rect x="11" y="16.4" width="14" height="8" rx="4"/><path d="M11 10.4 V13.4 H16.4 V16.6"/></g><g fill="none" stroke="#dcdcdc" stroke-width=".8"><rect x="2" y="2.6" width="14" height="8" rx="4"/><rect x="11" y="16.4" width="14" height="8" rx="4"/></g></svg><i class="abs" style="left:929.3px;top:541.5px;width:2px;height:30.5px;background:#d8d8d8;border-right:1px solid #fff;width:2px"></i><svg class="abs" style="left:947.0px;top:545.5px;width:28px;height:21px" viewBox="0 0 28 21"><rect x="0.8" y="0.8" width="26.4" height="19.4" fill="#f3f3f3" stroke="#b9b9b9" stroke-width="1.1"/><rect x="3" y="3" width="22" height="13.6" fill="#e2711d"/><path d="M3 8 C9 9 15 12 19 16.6 H3 Z" fill="#a3470f"/><path d="M3 12 C8 12.6 12 14 15 16.6 H3 Z" fill="#5d2a0b"/><circle cx="18.4" cy="7.4" r="2.6" fill="#f6b45c"/></svg><svg class="abs" style="left:985.5px;top:542.5px;width:34px;height:30px" viewBox="0 0 34 30"><rect x="1" y="1" width="26" height="19" fill="#f1f1f1" stroke="#bdbdbd" stroke-width="1"/><rect x="3" y="3.6" width="26" height="19" fill="#f1f1f1" stroke="#bdbdbd" stroke-width="1"/><g transform="translate(5,6.6)"><rect x="0.8" y="0.8" width="26.4" height="19.4" fill="#f3f3f3" stroke="#b9b9b9" stroke-width="1.1"/><rect x="3" y="3" width="22" height="13.6" fill="#e2711d"/><path d="M3 8 C9 9 15 12 19 16.6 H3 Z" fill="#a3470f"/><path d="M3 12 C8 12.6 12 14 15 16.6 H3 Z" fill="#5d2a0b"/><circle cx="18.4" cy="7.4" r="2.6" fill="#f6b45c"/></g><circle cx="28.6" cy="25.4" r="4.6" fill="#8cc63f"/></svg><svg class="abs" style="left:1032.0px;top:543.0px;width:26px;height:26px" viewBox="0 0 26 26"><circle cx="13" cy="13" r="12" fill="#f5a94a" stroke="#d98324" stroke-width="1.2"/><circle cx="13" cy="12" r="9" fill="#f9c772" opacity=".55"/><ellipse cx="8.8" cy="10" rx="1.8" ry="2.4" fill="#7a3f10"/><ellipse cx="17.2" cy="10" rx="1.8" ry="2.4" fill="#7a3f10"/><path d="M6.6 15.4 C8.6 21.6 17.4 21.6 19.4 15.4 Z" fill="#fff" stroke="#7a3f10" stroke-width="1"/></svg><svg class="abs" style="left:1075.5px;top:542.5px;width:25px;height:27px" viewBox="0 0 25 27"><rect x="0.6" y="0.6" width="23.8" height="25.8" fill="#3d3d3d"/><rect x="5.2" y="2.4" width="14.6" height="10.2" fill="#7ea6e6"/><rect x="5.2" y="14.4" width="14.6" height="10.2" fill="#7ea6e6"/><g fill="#d9d9d9"><rect x="1.6" y="2.4" width="2.2" height="2.6"/><rect x="1.6" y="7.2" width="2.2" height="2.6"/><rect x="1.6" y="12" width="2.2" height="2.6"/><rect x="1.6" y="16.8" width="2.2" height="2.6"/><rect x="1.6" y="21.6" width="2.2" height="2.6"/><rect x="21.2" y="2.4" width="2.2" height="2.6"/><rect x="21.2" y="7.2" width="2.2" height="2.6"/><rect x="21.2" y="12" width="2.2" height="2.6"/><rect x="21.2" y="16.8" width="2.2" height="2.6"/><rect x="21.2" y="21.6" width="2.2" height="2.6"/></g></svg>
<div id="foot">
<div class="btn" style="left:932px;top:19px;width:121px;height:52px;background:#1E9FFF;color:#fff;font-size:21px;line-height:52px;font-family:'Liberation Serif','Noto Serif CJK SC',serif">
<svg class="abs" style="left:24px;top:18.5px;width:26px;height:19px" viewBox="0 0 26 19" fill="none" stroke="#fff" stroke-width="2.3"><path d="M1 9 L8.8 16.6 L24.6 1.2"/></svg>
<span class="abs" style="left:59px;top:5px">提交</span></div>
<div class="btn" style="left:1077px;top:19px;width:122px;height:52px;background:transparent;border:1px solid #dcdcdc;color:#555;font-size:21px;line-height:50px;font-family:'Liberation Serif','Noto Serif CJK SC',serif">
<svg class="abs" style="left:23.5px;top:13.5px;width:27px;height:26px" viewBox="0 0 27 26" fill="none" stroke="#5a5a5a" stroke-width="1.8"><path d="M25 13 A11.8 11.8 0 1 1 19.4 3"/><path d="M25.4 1.4 V8.6 H18" /></svg>
<span class="abs" style="left:60px;top:5px">重置</span></div>
</div>
</div>
</div>
<div class="abs" style="left:0;top:1332px;width:2560px;height:2px;background:#c6c8b9;z-index:50"></div>
</body>
</html>
